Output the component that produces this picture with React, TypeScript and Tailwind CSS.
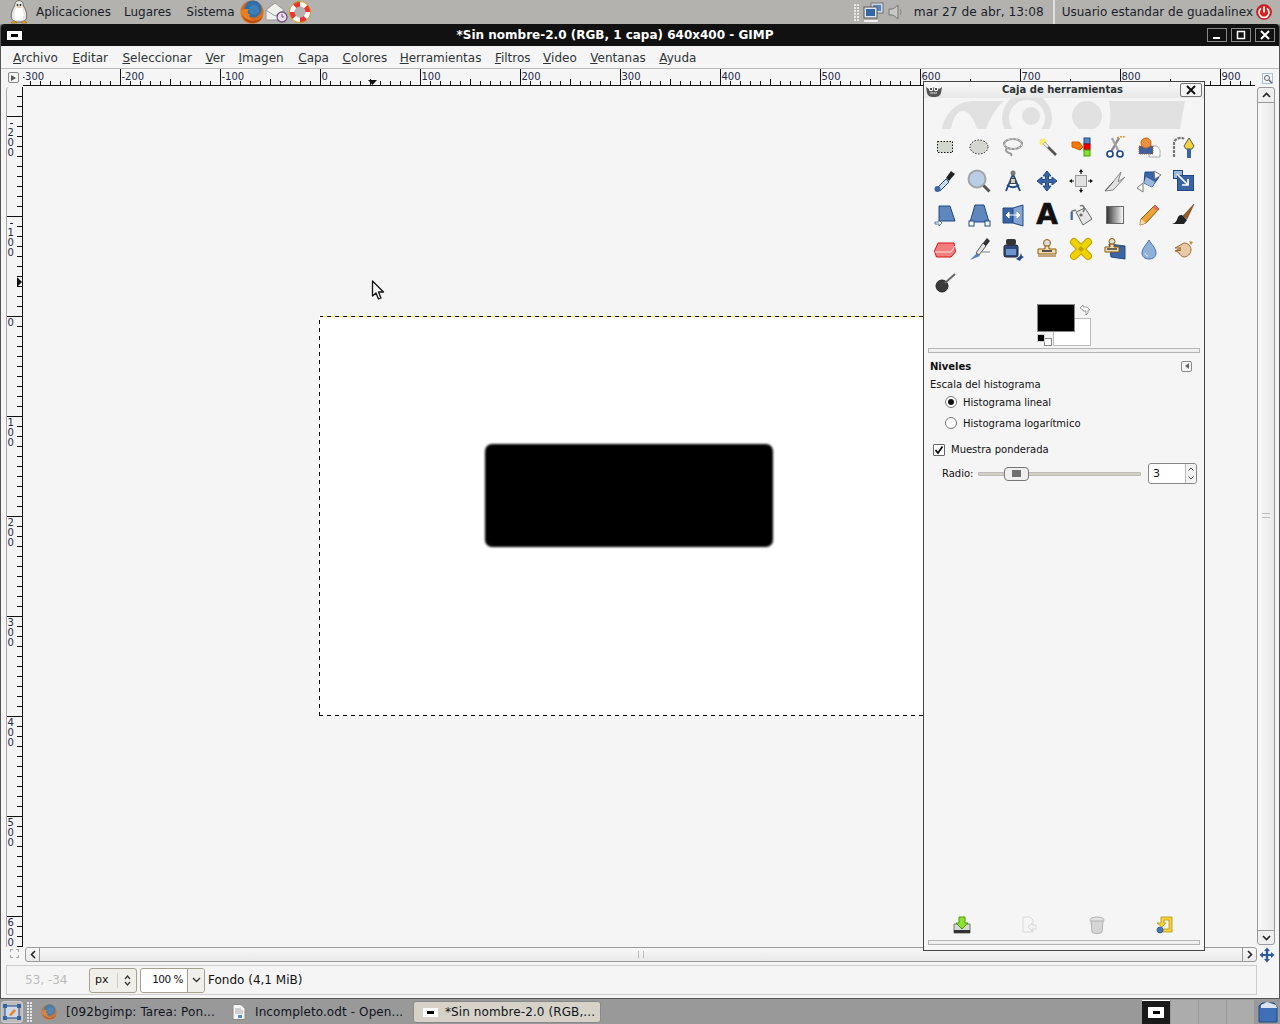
import React from "react";

const F = { fontFamily: '"DejaVu Sans", sans-serif' };

function Tool({ children }: { children: React.ReactNode }) {
  return (
    <div className="w-[34px] h-[34px] flex items-center justify-center">
      <svg width="24" height="24" viewBox="0 0 24 24">{children}</svg>
    </div>
  );
}

const B = "#3a65a4";
const BD = "#1f4a86";

const tools: React.ReactNode[] = [
  <><rect x="4.500" y="6.500" width="15" height="11" fill="#d3d7cf" stroke="#111" strokeDasharray="1.500 1.500" /></>,
  <><ellipse cx="12" cy="12" rx="9" ry="7" fill="#d3d7cf" stroke="#222" strokeDasharray="1.500 1.500" /></>,
  <><ellipse cx="12" cy="9" rx="9" ry="5" fill="none" stroke="#999" strokeWidth="2.200" /><ellipse cx="12" cy="9" rx="9" ry="5" fill="none" stroke="#eee" strokeWidth=".7" strokeDasharray="2 2" /><path d="M6 13c-2 2-1 4 2 5 2 .5 3 1 2 3" fill="none" stroke="#999" strokeWidth="2" /></>,
  <><circle cx="8" cy="7" r="3.500" fill="#fce94f" opacity="0.85" /><path d="M9 8l12 12" stroke="#555" strokeWidth="2.600" /><path d="M9 8l4 4" stroke="#eee" strokeWidth="2.200" /></>,
  <><path d="M3 7h7l4 5-3 3-5-2-3-1z" fill="#f57900" stroke="#ce5c00" /><rect x="15" y="3" width="6" height="6" fill="#5586c6" stroke="#204a87" /><rect x="15" y="9" width="6" height="6" fill="#e00" stroke="#a00" /><rect x="15" y="15" width="6" height="6" fill="#8ae234" stroke="#4e9a06" /></>,
  <><path d="M8 17L16 3" stroke="#8a8a8a" strokeWidth="2.400" /><path d="M16 17L9 3" stroke="#a5a5a5" strokeWidth="2.400" /><path d="M14 3c3-2 6-1 9-1" stroke="#e08a1e" strokeWidth="1.300" strokeDasharray="2 1" fill="none" /><circle cx="7" cy="19" r="3" fill="#fff" stroke={BD} strokeWidth="1.700" /><circle cx="17" cy="19" r="3" fill="#fff" stroke={BD} strokeWidth="1.700" /></>,
  <><path d="M13 11h7l3 4v7H12z" fill="#fff" stroke="#aaa" /><path d="M2 11h14v8H2z" fill="#3f5fa0" stroke="#b06030" strokeDasharray="1 1" /><circle cx="9" cy="8" r="5" fill="#e9913b" stroke="#c8661a" /></>,
  <><path d="M3 22V8c0-4 7-7 10-4" fill="none" stroke="#777" strokeWidth="2.200" strokeDasharray="3 1" /><path d="M18 3l5 8-2 3h-6l-2-3z" fill="#f3d43a" stroke="#555" /><rect x="16" y="14" width="4" height="9" fill={B} /></>,
  <><path d="M4 19l9-9 3 3-9 9z" fill="#cfdcec" stroke={BD} /><circle cx="4.500" cy="20" r="3" fill={B} /><path d="M13 9l5-7 4 3-6 7z" fill="#222" /></>,
  <><circle cx="10" cy="10" r="8.500" fill="#b9cde8" stroke="#a5a5a5" strokeWidth="2" /><path d="M16.500 16.500l6 6" stroke="#555" strokeWidth="3" /></>,
  <><path d="M12 5L5 22M12 5l7 17M6 16c4 3 8 3 12 0" fill="none" stroke={BD} strokeWidth="1.900" /><circle cx="12" cy="4" r="2.500" fill="#777" /><rect x="9.500" y="9.500" width="5" height="5" fill="#ccc" stroke="#444" /></>,
  <><path d="M12 2l4 5h-2.500v3.500H17V8l5 4-5 4v-2.500h-3.500V17H16l-4 5-4-5h2.500v-3.500H7V16l-5-4 5-4v2.500h3.500V7H8z" fill={B} stroke={BD} /></>,
  <><rect x="6.500" y="6.500" width="11" height="11" fill="#e0e0e0" stroke="#999" /><path d="M12 2v3M12 19v3M2 12h3M19 12h3" stroke="#111" strokeWidth="1.200" /><path d="M12 0l2 3h-4zM12 24l2-3h-4zM0 12l3-2v4zM24 12l-3-2v4z" fill="#111" /></>,
  <><path d="M2 22l8-9 8-10-3 10 7-5-8 9-4 4z" fill="#e2e2e2" stroke="#888" /><path d="M2 22l8-9" stroke="#555" /></>,
  <><path d="M8 3h9l5 5-7 10-8-4z" fill={B} stroke={BD} /><path d="M9 8l9 5-3 5-8-4z" fill="#9db7da" /><path d="M0 19l6-5v9zM17 2l7 4-6 4z" fill="#fff" stroke="#777" /></>,
  <><rect x="2.500" y="1.500" width="9" height="8" fill="#9db7da" stroke={BD} /><rect x="6.500" y="6.500" width="16" height="15" fill={B} stroke={BD} /><path d="M6 5l11 11M17 10v6h-6" fill="none" stroke="#fff" strokeWidth="1.700" /></>,
  <><path d="M6 3h11l5 15H6z" fill="#5f86bd" stroke={BD} /><path d="M2 19h4v-2l3 3-3 3v-2H2z" fill="#fff" stroke={BD} strokeWidth=".7" /></>,
  <><path d="M8 2h9l5 17H3z" fill="#5f86bd" stroke={BD} /><rect x="2" y="18" width="5" height="5" fill="#fff" stroke={BD} /><rect x="18" y="18" width="5" height="5" fill="#fff" stroke={BD} /></>,
  <><path d="M2 5h10v15H2z" fill={B} stroke={BD} /><path d="M12 5l10-3v21l-10-3z" fill="#85a4cf" stroke={BD} /><path d="M5 12h14M5 12l3-3v6zM19 12l-3-3v6z" fill="#fff" stroke="#fff" /></>,
  null,
  <><path d="M7 9l9-4 7 11-9 6z" fill="#e6e6e6" stroke="#666" /><path d="M3 17V8l4-1M11 3c3-2 6 2 3 6" fill="none" stroke="#777" strokeWidth="1.500" /><path d="M2.500 9v8" stroke={B} strokeWidth="1.800" /><circle cx="12" cy="12" r="1.600" fill="#666" /></>,
  <><defs><linearGradient id="gr" x1="0" x2="1"><stop offset="0" stopColor="#333" /><stop offset="1" stopColor="#fff" /></linearGradient></defs><rect x="3.500" y="3.500" width="17" height="17" fill="url(#gr)" stroke="#666" /></>,
  <><path d="M3 22l1-6L18 2l4 4L9 20z" fill="#e8a33b" stroke="#8f5902" /><path d="M3 22l1-6 5 4z" fill="#eeddb5" /><path d="M18 2l4 4-2 2-4-4z" fill="#e66" /></>,
  <><path d="M23 1L12 13l4 3z" fill="#9c5a28" stroke="#6b3a12" strokeWidth=".6" /><path d="M11 12l5 5-3 4H1c4-1 5-4 6-7 1-2 3-2 4-2z" fill="#222" /></>,
  <><path d="M5 6h16l1.500 9-4.500 5H3.500L1.500 14z" fill="#f08080" stroke="#d11" /><path d="M2 15h16l4-6" fill="none" stroke="#fff" strokeWidth=".8" /></>,
  <><path d="M3 23l7-7 3 3z" fill="#5586c6" /><path d="M9 16l7-10 3 3-7 9z" fill="#e4e4e4" stroke="#555" /><path d="M16 6l4-5 3 3-4 5z" fill="#333" /><path d="M15 15h8" stroke="#bbb" strokeWidth="2" /></>,
  <><rect x="3" y="8" width="14" height="12" rx="2" fill="#2e4a7c" stroke="#222" /><rect x="5" y="12" width="10" height="6" fill="#6f95cf" /><rect x="5" y="2" width="10" height="6" rx="2" fill="#333" /><path d="M15 22l4-3 1-3 1 3 2 1-3 2-1 2z" fill={BD} /></>,
  <><circle cx="12" cy="6" r="3.500" fill="#ddd" stroke="#8f5902" /><path d="M10 9h4v3h7v5H3v-5h7z" fill="#eeddb5" stroke="#8f5902" /><path d="M7 14h10" stroke="#222" strokeWidth="1.500" /><path d="M3 19h18" stroke="#8f5902" /></>,
  <><path d="M5 5l14 14M19 5L5 19" stroke="#c4a000" strokeWidth="8" strokeLinecap="round" /><path d="M5 5l14 14M19 5L5 19" stroke="#edd400" strokeWidth="6" strokeLinecap="round" /><path d="M9 12l3-3 3 3-3 3z" fill="#c4a000" /></>,
  <><path d="M6 7l16 2v13L8 20z" fill={B} stroke={BD} /><circle cx="9" cy="4.500" r="3" fill="#ddd" stroke="#8f5902" /><path d="M7 7h4v3h5v5H2v-5h5z" fill="#eeddb5" stroke="#8f5902" /><path d="M4 12h10" stroke="#222" strokeWidth="1.300" /></>,
  <><path d="M12 3c2 4 7 8 7 13 0 4-3 6-7 6s-7-2-7-6c0-5 5-9 7-13z" fill="#8fb0d8" stroke="#4b74a8" /><path d="M8 16c0 2 2 3 3 3" stroke="#dde8f5" fill="none" /></>,
  <><path d="M4 11l9-5c4 0 7 3 7 7s-4 7-7 7c-2 0-4-2-5-4l-3-2 5-1-6 1 6-3z" fill="#e9c9a8" stroke="#a0692c" /><path d="M18 4l4 1-2 3z" fill="#c4842c" /></>,
  <><circle cx="9" cy="15" r="6" fill="#3a3a3a" stroke="#222" /><path d="M12 12l10-9" stroke="#666" strokeWidth="2" /></>,
];

function Firefox({ s = 24 }: { s?: number }) {
  return (
    <svg width={s} height={s} viewBox="0 0 24 24">
      <circle cx="12" cy="12" r="11.500" fill="#d96a1b" />
      <circle cx="13" cy="9" r="8.500" fill="#2f6ea8" />
      <circle cx="14" cy="10" r="5" fill="#3d7fb8" />
      <path d="M1 11c0 7 5 12.500 12 12.500 6 0 10.500-5 10.500-10-2 4-5.500 6.500-9.500 6.500-5 0-5-4-4-6-3 0-3-3-1-5-3 0-6 0-8 2z" fill="#e8821f" />
      <path d="M2 14c1 6 6 9 11 9s9-3 10-7c-3 4-10 6-14 4-3-1-6-3-7-6z" fill="#bb4a10" />
    </svg>
  );
}

function Penguin() {
  return (
    <svg width="24" height="24" viewBox="0 0 24 24">
      <path d="M12 .5c3 0 4.500 3 4.500 5.500 2 3 4 8 3 12-1 3-3 4-7.500 4s-6.500-1-7.500-4c-1-4 1-9 3-12C7.500 3.500 9 .5 12 .5z" fill="#e6e6e4" stroke="#555" strokeWidth=".8" />
      <path d="M9 8c-2 4-2 9 0 12h6c2-3 2-8 0-12z" fill="#fff" />
      <circle cx="10.500" cy="5" r=".9" fill="#222" />
      <circle cx="13.500" cy="5" r=".9" fill="#222" />
      <path d="M10 6.500h4l-2 1.500z" fill="#e8a33b" />
      <path d="M4 23l3-2.500 3 2.500zM14 23l3-2.500 3 2.500z" fill="#e6a41e" stroke="#a06c0c" strokeWidth=".6" />
    </svg>
  );
}

function WindowGlyph({ w = 15, h = 8 }: { w?: number; h?: number }) {
  return (
    <div className="bg-white flex items-center justify-center" style={{ width: w, height: h + 1 }}>
      <div className="w-[7px] h-[3px] bg-black" />
    </div>
  );
}

function HRuler() {
  const ticks: React.ReactNode[] = [];
  for (let x = -300; x <= 930; x += 10) {
    const px = x + 320 - 23;
    const major = x % 100 === 0;
    const mid = x % 50 === 0;
    if (px >= 0)
      ticks.push(
        <line key={x} x1={px + 0.5} x2={px + 0.5} y1={major ? 0 : mid ? 10 : 12} y2="16" stroke="#111" />
      );
    if (major)
      ticks.push(
        <text key={"t" + x} x={px + 1.500} y="11" fontSize="10" fill="#1c2a4a" style={F}>
          {x}
        </text>
      );
  }
  return (
    <svg width="1232" height="17" viewBox="0 0 1232 17" className="block">
      {ticks}
      <line x1="0" x2="1232" y1="16.500" y2="16.500" stroke="#111" />
      <path d="M345 11h9l-4.500 5z" fill="#111" />
    </svg>
  );
}

function VRuler() {
  const items: React.ReactNode[] = [];
  for (let y = -220; y <= 630; y += 10) {
    const py = y + 316 - 87;
    if (py < 0) continue;
    const major = y % 100 === 0;
    items.push(
      <line key={y} x1={major ? 0 : 10} x2="15" y1={py + 0.5} y2={py + 0.5} stroke="#111" />
    );
    if (major) {
      const digits = String(Math.abs(y)).split("");
      digits.forEach((d, i) =>
        items.push(
          <text key={y + "-" + i} x="0.500" y={py + 10 + (y === 0 ? 0 : 10) * (y < 0 ? i + 1 : i)} fontSize="10" fill="#1c2a4a" style={F}>
            {d}
          </text>
        )
      );
      if (y < 0) items.push(<line key={"m" + y} x1="3" x2="6" y1={py + 7.500} y2={py + 7.500} stroke="#1c2a4a" />);
    }
  }
  return (
    <svg width="16" height="860" viewBox="0 0 16 860" className="block">
      {items}
      <line x1="15.500" x2="15.500" y1="0" y2="860" stroke="#111" />
      <path d="M10 190v10l5-5z" fill="#111" />
    </svg>
  );
}

function HandleBar() {
  return <div className="h-[5px] mx-[4px] border border-[#b5b5b5] bg-[#f0f0f0]" />;
}

function Dots({ rows = 8 }: { rows?: number }) {
  return (
    <div className="grid grid-cols-2 gap-[1px] w-[5px] shrink-0">
      {Array.from({ length: rows * 2 }).map((_, i) => (
        <div key={i} className="w-[2px] h-[2px] bg-[#e8e8e8]" />
      ))}
    </div>
  );
}

const menu: [string, string, string][] = [
  ["A", "rchivo", ""],
  ["E", "ditar", "ml-[1px]"],
  ["S", "eleccionar", "ml-[1px]"],
  ["V", "er", ""],
  ["I", "magen", ""],
  ["C", "apa", "ml-[1px]"],
  ["C", "olores", ""],
  ["H", "erramientas", "ml-[-1px]"],
  ["F", "iltros", ""],
  ["V", "ideo", "ml-[-1px]"],
  ["V", "entanas", ""],
  ["A", "yuda", ""],
];

function Toolbox() {
  return (
    <div className="absolute left-[923px] top-[81px] w-[282px] h-[870px] bg-[#f5f5f5] border border-[#444] flex flex-col text-[#111]">
      <div className="h-[16px] shrink-0 relative flex items-center justify-center pb-[2px] bg-gradient-to-b from-[#f8f8f8] to-[#e8e8e8]">
        <svg width="18" height="14" viewBox="0 0 18 14" className="absolute left-[1px] top-[1px]">
          <path d="M1 4l3 2c2-2 8-2 10 0l3-2-1 6c-1 3-3 4-7 4s-6-1-7-4z" fill="#555" />
          <circle cx="6" cy="6" r="2.200" fill="#fff" />
          <circle cx="11" cy="6" r="2.200" fill="#fff" />
          <circle cx="6" cy="6" r="1" fill="#111" />
          <circle cx="11" cy="6" r="1" fill="#111" />
          <path d="M5 10h7" stroke="#ddd" />
        </svg>
        <span className="text-[10px] font-bold text-[#2e3436] ml-[-3px]">Caja de herramientas</span>
        <div className="absolute right-[2px] top-[1px] w-[22px] h-[14px] border border-[#777] rounded-[2px] bg-[#f5f5f5] flex items-center justify-center">
          <svg width="10" height="10" viewBox="0 0 10 10">
            <path d="M1 1l8 8M9 1l-8 8" stroke="#111" strokeWidth="2" />
          </svg>
        </div>
      </div>
      <div className="h-[32px] shrink-0 overflow-hidden">
        <svg width="280" height="31" viewBox="0 0 280 31">
          <path d="M18 31C22 12 35 3 50 3H80C72 10 66 20 62 31H53C50 20 44 13 39 13 33 13 29 20 27 31Z" fill="#e1e1e1" />
          <circle cx="103" cy="20" r="25" fill="#e1e1e1" />
          <circle cx="103" cy="20" r="18" fill="#f5f5f5" />
          <circle cx="107" cy="18" r="9" fill="#e1e1e1" />
          <circle cx="163" cy="18" r="15" fill="#e1e1e1" />
          <path d="M185 3h76l-5 28h-71c2-9 2-19 0-28z" fill="#e1e1e1" />
        </svg>
      </div>
      <div className="ml-[4px] grid grid-cols-[repeat(8,34px)] grid-rows-[repeat(5,34px)] shrink-0">
        {tools.map((t, i) =>
          t === null ? (
            <div key={i} className="w-[34px] h-[34px] flex items-center justify-center">
              <span className="text-[28px] leading-[34px] font-bold text-[#111] [-webkit-text-stroke:0.6px_#111]">A</span>
            </div>
          ) : (
            <Tool key={i}>{t}</Tool>
          )
        )}
      </div>
      <div className="h-[44px] mt-[4px] shrink-0 flex justify-center">
        <div className="relative w-[54px] h-[42px]">
          <div className="absolute left-[16px] top-[14px] w-[38px] h-[28px] bg-white border border-[#bbb]" />
          <div className="absolute left-0 top-0 w-[38px] h-[28px] bg-black border border-[#888]" />
          <div className="absolute left-[7px] top-[34px] w-[8px] h-[8px] bg-white border border-[#888]" />
          <div className="absolute left-0 top-[30px] w-[8px] h-[8px] bg-black border border-[#ccc]" />
          <svg width="12" height="12" viewBox="0 0 12 12" className="absolute left-[42px] top-0">
            <path d="M1 4l3-3v2h4l3 3-2 0v3l-2 2V7H4V6z" fill="#fff" stroke="#888" strokeWidth=".8" />
          </svg>
        </div>
      </div>
      <HandleBar />
      <div className="px-[6px] mt-[7px] flex items-center justify-between h-[12px]">
        <span className="text-[10px] font-bold">Niveles</span>
        <div className="w-[11px] h-[11px] border border-[#888] rounded-[2px] mr-[6px] flex items-center justify-center">
          <div className="w-0 h-0 border-y-[3px] border-y-transparent border-r-[4px] border-r-[#666]" />
        </div>
      </div>
      <div className="px-[6px] mt-[7px] text-[10px] leading-[12px]">Escala del histograma</div>
      <div className="pl-[21px] mt-[5px] flex items-center gap-[6px] h-[12px] text-[10px]">
        <div className="w-[12px] h-[12px] rounded-full border border-[#777] bg-white flex items-center justify-center">
          <div className="w-[6px] h-[6px] rounded-full bg-[#111]" />
        </div>
        <span>Histograma lineal</span>
      </div>
      <div className="pl-[21px] mt-[9px] flex items-center gap-[6px] h-[12px] text-[10px]">
        <div className="w-[12px] h-[12px] rounded-full border border-[#777] bg-white" />
        <span>Histograma logarítmico</span>
      </div>
      <div className="pl-[9px] mt-[14px] flex items-center gap-[6px] h-[13px] text-[10px]">
        <div className="w-[12px] h-[12px] border border-[#666] rounded-[1px] bg-white flex items-center justify-center">
          <svg width="10" height="10" viewBox="0 0 10 10">
            <path d="M1.500 5l2.500 3L8.500 1.500" fill="none" stroke="#111" strokeWidth="1.800" />
          </svg>
        </div>
        <span>Muestra ponderada</span>
      </div>
      <div className="pl-[18px] mt-[7px] flex items-center h-[21px] text-[10px]">
        <span className="w-[36px]">Radio:</span>
        <div className="relative w-[163px] h-[4px] bg-[#d6d0c4] border border-[#bbb] rounded-[1px]">
          <div className="absolute left-[25px] top-[-6px] w-[25px] h-[14px] border border-[#777] rounded-[4px] bg-[#efefef] flex items-center justify-center">
            <div className="w-[9px] h-[7px] bg-[radial-gradient(#666_0.700px,transparent_0.800px)] bg-[length:2px_2px]" />
          </div>
        </div>
        <div className="ml-[7px] w-[49px] h-[21px] border border-[#888] rounded-[3px] bg-white flex">
          <div className="flex-1 pl-[4px] text-[11px] leading-[19px]">3</div>
          <div className="w-[11px] border-l border-[#bbb] flex flex-col items-center justify-around bg-[#f2f2f2] rounded-r-[3px]">
            <svg width="6" height="4" viewBox="0 0 6 4"><path d="M.5 3.500L3 1l2.500 2.500" fill="none" stroke="#444" /></svg>
            <svg width="6" height="4" viewBox="0 0 6 4"><path d="M.5.500L3 3 5.500.500" fill="none" stroke="#444" /></svg>
          </div>
        </div>
      </div>
      <div className="flex-1" />
      <div className="h-[20px] shrink-0 flex items-center justify-between pl-[29px] pr-[31px]">
        <svg width="18" height="18" viewBox="0 0 18 18">
          <path d="M1 8h16v9H1z" fill="#d8d8d8" stroke="#777" />
          <rect x="1" y="14" width="16" height="3" fill="#333" />
          <path d="M6 1h6v6h3l-6 6-6-6h3z" fill="#8ae234" stroke="#4e9a06" />
        </svg>
        <svg width="18" height="18" viewBox="0 0 18 18" opacity=".35">
          <path d="M3 1h7l3 3v12H3z" fill="#f5f5f5" stroke="#aaa" />
          <path d="M8 11l4-4v2h4v4h-4v2z" fill="#eee" stroke="#aaa" />
        </svg>
        <svg width="18" height="18" viewBox="0 0 18 18" opacity=".75">
          <ellipse cx="9" cy="4" rx="7" ry="3" fill="#ddd" stroke="#999" />
          <path d="M3 5l1 11c2 2 8 2 10 0l1-11z" fill="#ccc" stroke="#999" />
        </svg>
        <svg width="18" height="18" viewBox="0 0 18 18">
          <path d="M6 1h11v15H8v-3h6V4H9v3h2l-4 4-5-4h4z" fill="#f3d43a" stroke="#b8930a" strokeWidth=".8" />
          <circle cx="5" cy="14" r="3" fill="#4a74b0" stroke="#204a87" strokeWidth=".7" />
        </svg>
      </div>
      <div className="mt-[5px] mb-[5px]">
        <HandleBar />
      </div>
    </div>
  );
}

export default function App() {
  return (
    <div className="relative w-[1280px] h-[1024px] overflow-hidden bg-[#999] flex flex-col" style={F}>
      {/* Top panel */}
      <div className="h-[24px] shrink-0 bg-[#b3b2ae] flex items-center text-[12px] text-[#1a1f2b]">
        <div className="ml-[7px] w-[24px] h-[24px]">
          <Penguin />
        </div>
        <span className="ml-[5px]">Aplicaciones</span>
        <span className="ml-[13px]">Lugares</span>
        <span className="ml-[15px]">Sistema</span>
        <div className="ml-[5px] flex items-center">
          <Firefox />
          <svg width="24" height="24" viewBox="0 0 24 24">
            <path d="M2 10l9-7 9 7v10H2z" fill="#f1f1ef" stroke="#999" />
            <path d="M2 10l9 6 9-6" fill="none" stroke="#999" />
            <circle cx="18" cy="17" r="5" fill="#e8e0ec" stroke="#75507b" strokeWidth="1.300" />
            <path d="M18 14v3h2" fill="none" stroke="#75507b" />
          </svg>
          <svg width="24" height="24" viewBox="0 0 24 24">
            <circle cx="12" cy="12" r="8" fill="none" stroke="#e33" strokeWidth="5" />
            <circle cx="12" cy="12" r="8" fill="none" stroke="#fff" strokeWidth="5" strokeDasharray="6.500 6" />
            <circle cx="12" cy="12" r="10.500" fill="none" stroke="#c4a000" strokeWidth=".8" />
          </svg>
        </div>
        <div className="flex-1" />
        <Dots rows={6} />
        <svg width="22" height="22" viewBox="0 0 22 22" className="ml-[3px]">
          <rect x="9" y="2" width="12" height="10" fill="#cfd8e6" stroke="#777" />
          <rect x="11" y="4" width="8" height="6" fill="#5a86c0" />
          <rect x="2" y="6" width="13" height="11" fill="#dfe5ee" stroke="#555" />
          <rect x="4" y="8" width="9" height="7" fill="#3465a4" />
          <path d="M2 20h14" stroke="#eee" strokeWidth="2" />
        </svg>
        <svg width="18" height="18" viewBox="0 0 18 18" className="ml-[3px]">
          <path d="M2 6h4l5-4v14l-5-4H2z" fill="#c8c8c4" stroke="#777" />
          <path d="M13 6c1.500 1.500 1.500 4.500 0 6" fill="none" stroke="#888" />
        </svg>
        <span className="ml-[9px] text-[12.200px]">mar 27 de abr, 13:08</span>
        <div className="ml-[9px] w-[2px] h-[24px] bg-[#e0e0de]" />
        <span className="ml-[7px]">Usuario estandar de guadalinex</span>
        <svg width="16" height="16" viewBox="0 0 16 16" className="ml-[3px] mr-[8px]">
          <circle cx="8" cy="8" r="7.500" fill="#d92020" stroke="#a00" strokeWidth=".5" />
          <path d="M5 4.500a5 5 0 1 0 6 0" fill="none" stroke="#fff" strokeWidth="1.600" />
          <path d="M8 2.500v6" stroke="#fff" strokeWidth="1.800" />
        </svg>
      </div>

      {/* GIMP window */}
      <div className="h-[975px] shrink-0 bg-[#f5f5f5] border-x border-b border-[#555] rounded-t-[3px] flex flex-col">
        <div className="h-[22px] shrink-0 bg-[#111] relative flex items-center justify-center pr-[50px] rounded-t-[3px]">
          <div className="absolute left-[6px] top-[7px]">
            <WindowGlyph />
          </div>
          <span className="text-white font-bold text-[12px]">*Sin nombre-2.0 (RGB, 1 capa) 640x400 - GIMP</span>
          <div className="absolute right-[4px] top-[4px] flex gap-[4px]">
            {["min", "max", "close"].map((k) => (
              <div key={k} className="w-[20px] h-[14px] border border-[#888] flex items-center justify-center">
                <svg width="10" height="10" viewBox="0 0 10 10">
                  {k === "min" && <rect x="1" y="7" width="7" height="2" fill="#fff" />}
                  {k === "max" && <rect x="1.500" y="1.500" width="7" height="7" fill="none" stroke="#fff" strokeWidth="1.500" />}
                  {k === "close" && <path d="M1 1l8 8M9 1l-8 8" stroke="#fff" strokeWidth="2" />}
                </svg>
              </div>
            ))}
          </div>
        </div>
        <div className="h-[22px] shrink-0 flex items-center pl-[12px] pt-[1px] gap-[13.500px] text-[12px] text-[#2e3436]">
          {menu.map(([a, b, m], i) => (
            <span key={i} className={m}>
              <span className="underline">{a}</span>
              {b}
            </span>
          ))}
        </div>
        <div className="h-[19px] shrink-0 flex border-t border-[#bbb]">
          <div className="w-[22px] shrink-0 pl-[7px] pt-[3px]">
            <div className="w-[11px] h-[11px] border border-[#888] rounded-[2px] flex items-center justify-center">
              <div className="w-0 h-0 border-y-[3px] border-y-transparent border-l-[5px] border-l-[#555]" />
            </div>
          </div>
          <div className="w-[1232px] shrink-0 overflow-hidden">
            <HRuler />
          </div>
          <div className="ml-[7px] mt-[4px]">
            <svg width="11" height="11" viewBox="0 0 11 11">
              <rect x=".5" y=".5" width="10" height="10" fill="none" stroke="#5a86c0" strokeDasharray="1 1" />
              <circle cx="5" cy="5" r="2.500" fill="none" stroke="#666" />
              <path d="M7 7l3 3" stroke="#666" strokeWidth="1.500" />
            </svg>
          </div>
        </div>
        <div className="h-[860px] shrink-0 flex">
          <div className="w-[22px] shrink-0 pl-[5px]">
            <div className="border-l border-[#aaa] rounded-tl-[3px]">
              <VRuler />
            </div>
          </div>
          <div className="relative w-[1232px] shrink-0 bg-[#f5f5f5] overflow-hidden">
            <div className="absolute left-[296px] top-[229px] w-[640px] h-[400px] bg-white">
              <div className="absolute left-[166px] top-[128px] w-[288px] h-[103px] bg-black rounded-[7px] blur-[0.8px]" />
              <div className="absolute left-0 top-0 w-full h-px bg-[repeating-linear-gradient(90deg,#000_0_4px,#ff0_4px_8px)]" />
              <div className="absolute left-0 bottom-0 w-full h-px bg-[repeating-linear-gradient(90deg,#000_0_4px,#fff_4px_8px)]" />
              <div className="absolute left-0 top-0 h-full w-px bg-[repeating-linear-gradient(0deg,#000_0_4px,#fff_4px_8px)]" />
            </div>
          </div>
          <div className="w-[18px] shrink-0 ml-[2px] flex flex-col border border-[#999] rounded-[3px] bg-[#efefef] h-[858px] mr-[5px]">
            <div className="h-[15px] border-b border-[#999] flex items-center justify-center">
              <svg width="9" height="6" viewBox="0 0 9 6"><path d="M1 5l3.500-3.500L8 5" fill="none" stroke="#222" strokeWidth="1.600" /></svg>
            </div>
            <div className="flex-1 bg-gradient-to-r from-[#f8f8f8] to-[#e9e9e9] relative">
              <div className="absolute top-[410px] left-[4px] w-[8px] h-[5px] border-y border-[#bbb]" />
            </div>
            <div className="h-[14px] border-t border-[#999] flex items-center justify-center">
              <svg width="9" height="6" viewBox="0 0 9 6"><path d="M1 1l3.500 3.500L8 1" fill="none" stroke="#222" strokeWidth="1.600" /></svg>
            </div>
          </div>
        </div>
        <div className="h-[16px] shrink-0 flex">
          <div className="w-[24px] shrink-0 pl-[9px] pt-[2px]">
            <div className="w-[9px] h-[9px] border border-dashed border-[#aaa]" />
          </div>
          <div className="w-[1232px] shrink-0 border border-[#999] rounded-[3px] h-[15px] bg-gradient-to-b from-[#f8f8f8] to-[#e9e9e9] flex items-center justify-between">
            <div className="w-[14px] h-full border-r border-[#999] flex items-center justify-center">
              <svg width="6" height="9" viewBox="0 0 6 9"><path d="M5 1L1.500 4.500 5 8" fill="none" stroke="#222" strokeWidth="1.600" /></svg>
            </div>
            <div className="w-[6px] h-[7px] border-x border-[#bbb]" />
            <div className="w-[14px] h-full border-l border-[#999] flex items-center justify-center">
              <svg width="6" height="9" viewBox="0 0 6 9"><path d="M1 1l3.500 3.500L1 8" fill="none" stroke="#222" strokeWidth="1.600" /></svg>
            </div>
          </div>
          <div className="ml-[2px]">
            <svg width="16" height="16" viewBox="0 0 16 16">
              <path d="M8 .5l3 3.500H9.200v3H12V5l3.500 3-3.500 3V9H9.200v3H11l-3 3.500L5 12h1.800V9H4v2L.5 8 4 5v2h2.800V4H5z" fill="#2a5aa0" />
            </svg>
          </div>
        </div>
        <div className="mt-[2px] h-[30px] shrink-0 ml-[5px] w-[1251px] border border-[#ccc] flex items-center pl-[18px] text-[12px] text-[#111]">
          <span className="w-[64px] text-[#bbb]">53, -34</span>
          <div className="w-[48px] h-[25px] border border-[#a5a08f] rounded-[3px] bg-[#f1efe9] flex items-center pl-[5px]">
            <span className="flex-1 text-[11px]">px</span>
            <div className="w-[19px] h-[15px] border-l border-[#ccc] flex items-center justify-center">
              <svg width="7" height="11" viewBox="0 0 7 11"><path d="M1 4l2.500-3L6 4M1 7l2.500 3L6 7" fill="none" stroke="#333" strokeWidth="1.200" /></svg>
            </div>
          </div>
          <div className="ml-[3px] w-[65px] h-[25px] border border-[#a5a08f] rounded-[3px] bg-white flex items-center">
            <span className="flex-1 text-right pr-[4px] text-[10.500px] tracking-[-0.5px]">100 %</span>
            <div className="w-[17px] h-full bg-[#f1efe9] border-l border-[#a5a08f] rounded-r-[3px] flex items-center justify-center">
              <svg width="9" height="6" viewBox="0 0 9 6"><path d="M1 1l3.500 3.500L8 1" fill="none" stroke="#333" strokeWidth="1.300" /></svg>
            </div>
          </div>
          <span className="ml-[3px]">Fondo (4,1 MiB)</span>
        </div>
      </div>

      {/* Bottom panel */}
      <div className="flex-1 bg-[#999] flex items-center pt-[1px] text-[12px] text-[#10151f] min-h-0">
        <div className="ml-[1px] w-[22px] h-[22px] border border-[#ccc] rounded-[3px] bg-[#bbb] flex items-center justify-center">
          <svg width="18" height="18" viewBox="0 0 18 18">
            <rect x="2" y="3" width="14" height="12" fill="#cfd8e6" stroke="#204a87" />
            <rect x="0" y="1" width="4" height="4" fill="#3465a4" />
            <rect x="14" y="1" width="4" height="4" fill="#3465a4" />
            <rect x="0" y="13" width="4" height="4" fill="#3465a4" />
            <rect x="14" y="13" width="4" height="4" fill="#3465a4" />
            <path d="M6 12l5-6 2 2-5 5z" fill="#e8821f" />
          </svg>
        </div>
        <div className="ml-[4px]">
          <Dots rows={7} />
        </div>
        <div className="ml-[9px] w-[16px] h-[16px] opacity-70">
          <Firefox s={16} />
        </div>
        <span className="ml-[9px] w-[165px] shrink-0 whitespace-nowrap tracking-[0.1px]">[092bgimp: Tarea: Pon...</span>
        <svg width="14" height="16" viewBox="0 0 14 16" className="ml-[1px]">
          <path d="M1 .5h8l4 4v11H1z" fill="#f5f5f5" stroke="#888" />
          <path d="M3 5h6M3 7h8M3 9h8" stroke="#aaa" />
          <rect x="6" y="11" width="4" height="3" fill="#5586c6" />
        </svg>
        <span className="ml-[9px] w-[158px] shrink-0 whitespace-nowrap tracking-[0.1px]">Incompleto.odt - Open...</span>
        <div className="w-[188px] h-[22px] shrink-0 border border-[#888] rounded-[3px] bg-[#d6d2c8] flex items-center pl-[9px]">
          <WindowGlyph />
          <span className="ml-[7px] whitespace-nowrap tracking-[0.1px]">*Sin nombre-2.0 (RGB,...</span>
        </div>
        <div className="flex-1" />
        <div className="flex h-[24px] mr-[4px] gap-[1px]">
          <div className="w-[28px] bg-[#1a1a1a] border-t border-white flex items-center justify-center">
            <div className="w-[16px] h-[11px] bg-white flex items-center justify-center">
              <div className="w-[7px] h-[3px] bg-black" />
            </div>
          </div>
          <div className="w-[27px] bg-[#acacac]" />
          <div className="w-[27px] bg-[#acacac]" />
          <div className="w-[27px] bg-[#acacac]" />
        </div>
        <svg width="20" height="22" viewBox="0 0 20 22" className="mr-[2px]">
          <path d="M1 5l3-3h12l3 4v15H1z" fill="#3f6fb5" stroke="#1f4a86" />
          <path d="M3 4l6-3 9 3 1 3H3z" fill="#dbe4f0" />
        </svg>
      </div>

      <Toolbox />

      {/* Mouse cursor */}
      <svg width="16" height="22" viewBox="0 0 16 22" className="absolute left-[371px] top-[280px]">
        <path d="M1.500 1v15l3.500-3 2.500 6 2.500-1-2.500-6h5z" fill="#f5f5f5" stroke="#111" strokeWidth="1.300" strokeLinejoin="round" />
      </svg>
    </div>
  );
}
